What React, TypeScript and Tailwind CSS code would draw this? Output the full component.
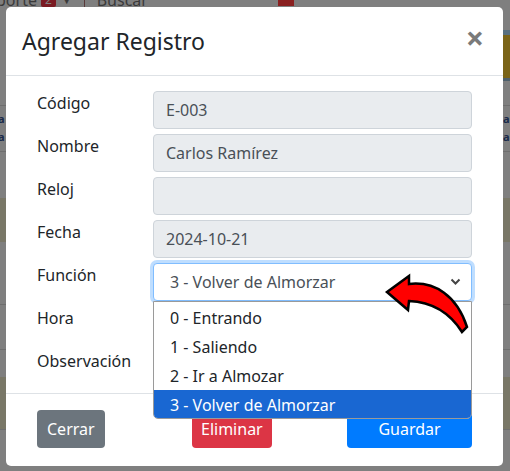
import React from "react";

const font = { fontFamily: '"Noto Sans", "Open Sans", Arial, sans-serif' };

function Row({ label, children }: { label: string; children?: React.ReactNode }) {
  return (
    <div className="flex h-[38px] mb-[5px]">
      <div className="w-[131px] pl-[15px] text-[16px] leading-[24px] text-[#212529] shrink-0">{label}</div>
      <div className="w-[319px]">{children}</div>
    </div>
  );
}

function ROInput({ value }: { value: string }) {
  return (
    <div className="h-[38px] w-full rounded-[4px] border border-[#ced4da] bg-[#e9ecef] px-[12px] flex items-center text-[16px] text-[#495057]">
      {value}
    </div>
  );
}

function Strip({ side }: { side: "l" | "r" }) {
  return (
    <div className="w-full h-full flex flex-col text-[11px] font-bold text-[#1a2a4a] leading-[18px]">
      {side === "r" ? (
        <>
          <div className="h-[30px]" />
          <div className="h-[5px] bg-[#587080]" />
          <div className="h-[43px] bg-[#7a6418]" />
          <div className="h-[28px] border-t-[3px] border-[#4e606c] border-b border-b-[#6e6e6e]" />
        </>
      ) : (
        <div className="h-[106px] border-b border-[#6e6e6e]" />
      )}
      <div className="h-[46px] border-b border-[#6e6e6e] pt-[4px]">
        <div className={side === "l" ? "ml-[-2px]" : "ml-[0px]"}>a</div>
        <div className={side === "l" ? "ml-[-2px]" : "ml-[0px]"}>a</div>
      </div>
      <div className="h-[46px]" />
      <div className="h-[44px] bg-[#797767]" />
      <div className="h-[63px] border-b border-[#6e6e6e]" />
      <div className="h-[45px] border-b border-[#6e6e6e]" />
      <div className="h-[27px]" />
      <div className="h-[53px] bg-[#797767] border-b border-[#6e6e6e]" />
      <div className="flex-1" />
    </div>
  );
}

export default function App() {
  return (
    <div className="relative w-[510px] h-[471px] overflow-hidden bg-[#7f7f7f]" style={font}>
      {/* background page, dimmed */}
      <div className="absolute left-0 top-[-9px] flex items-center h-[18px] text-[16px] text-[#3a3a3a]">
        <span className="ml-[-4px]">porte</span>
        <span className="ml-[4px] bg-[#7a1a22] text-[#7f7f7f] text-[12px] px-[4px] leading-[14px] rounded-[2px]">2</span>
        <span className="ml-[6px] text-[10px]">▼</span>
        <span className="ml-[12px] w-px h-[18px] bg-[#5a3a3a]" />
        <span className="ml-[12px]">Buscar</span>
      </div>
      <div className="absolute left-[278px] top-0 w-[16px] h-[6px] bg-[#8a2020]" />
      <div className="absolute left-0 top-0 w-[6px] h-[471px] overflow-hidden">
        <Strip side="l" />
      </div>
      <div className="absolute left-[503px] top-0 w-[7px] h-[471px] overflow-hidden">
        <Strip side="r" />
      </div>

      {/* modal */}
      <div className="absolute left-[6px] top-[7px] w-[497px] h-[459px] bg-white rounded-[5px] flex flex-col">
        <div className="h-[69px] border-b border-[#dee2e6] flex items-center justify-between pl-[16px] pr-[19px]">
          <div className="text-[23px] text-[#212529] leading-[36px]">Agregar Registro</div>
          <div className="text-[32px] font-bold text-[#7a7a7a] leading-none mt-[-6px]">×</div>
        </div>
        <div className="h-[318px] border-b border-[#dee2e6] pt-[15px] pl-[16px] relative">
          <Row label="Código"><ROInput value="E-003" /></Row>
          <Row label="Nombre"><ROInput value="Carlos Ramírez" /></Row>
          <Row label="Reloj"><ROInput value="" /></Row>
          <Row label="Fecha"><ROInput value="2024-10-21" /></Row>
          <Row label="Función">
            <div className="h-[38px] w-full rounded-[4px] border border-[#80bdff] bg-white px-[16px] flex items-center justify-between text-[16px] text-[#495057] shadow-[0_0_0_3px_rgba(0,123,255,0.25)]">
              <span>3 - Volver de Almorzar</span>
              <svg width="11" height="8" viewBox="0 0 11 8" className="mr-[-6px]">
                <path d="M1.5 1.5 L5.5 5.5 L9.5 1.5" fill="none" stroke="#444" strokeWidth="2" />
              </svg>
            </div>
          </Row>
          <Row label="Hora" />
          <Row label="Observación" />

          {/* dropdown list */}
          <div className="absolute left-[147px] top-[225px] w-[319px] h-[118px] bg-white border border-[#9a9a9a] rounded-b-[5px] overflow-hidden pt-px text-[16px] text-[#212529] z-10">
            <div className="h-[29px] flex items-center pl-[16px]">0 - Entrando</div>
            <div className="h-[29px] flex items-center pl-[16px]">1 - Saliendo</div>
            <div className="h-[29px] flex items-center pl-[16px]">2 - Ir a Almozar</div>
            <div className="h-[29px] flex items-center pl-[16px] bg-[#1967d2] text-white">3 - Volver de Almorzar</div>
          </div>
        </div>
        <div className="flex-1 grid grid-cols-3 px-[16px] pt-[16px]">
          <div className="px-[15px]">
            <div className="inline-flex h-[38px] px-[10px] items-center rounded-[4px] bg-[#6c757d] text-white text-[16px]">Cerrar</div>
          </div>
          <div className="px-[15px]">
            <div className="inline-flex h-[38px] px-[9px] items-center rounded-[4px] bg-[#dc3545] text-white text-[16px]">Eliminar</div>
          </div>
          <div className="px-[15px]">
            <div className="flex h-[38px] justify-center items-center rounded-[4px] bg-[#007bff] text-white text-[16px]">Guardar</div>
          </div>
        </div>
      </div>

      {/* red arrow annotation */}
      <svg className="absolute left-0 top-0 z-20" width="510" height="471" viewBox="0 0 510 471">
        <path
          d="M387 292 L409 276 L409 284 C435 281 457 296 467 327 L462 332 C450 313 432 302 409 301 L408 310 Z"
          fill="#ff0000"
          stroke="#000"
          strokeWidth="2.5"
          strokeLinejoin="miter"
        />
      </svg>
    </div>
  );
}
